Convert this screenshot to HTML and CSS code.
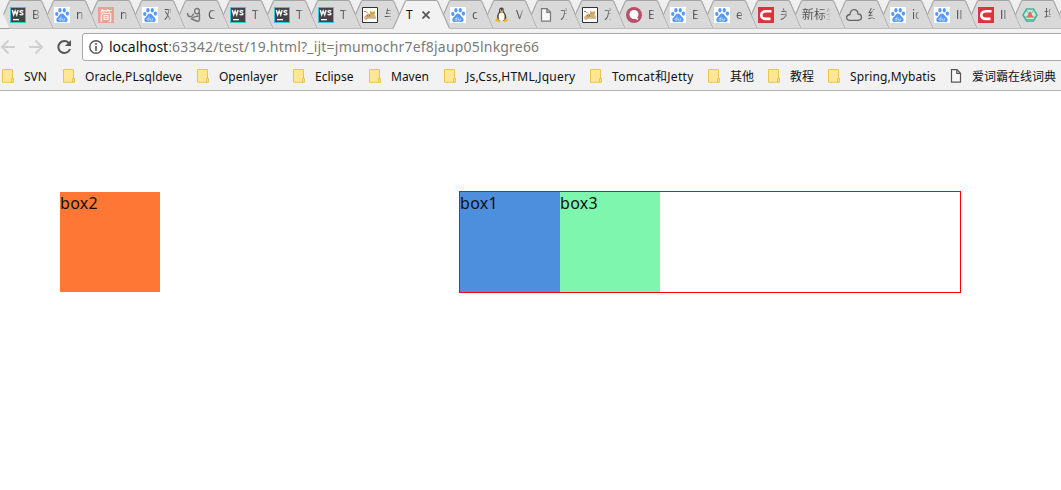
FILE: index.html
```html
<!DOCTYPE html>
<html lang="zh">
<head>
<meta charset="utf-8">
<title>T</title>
<link rel="stylesheet" href="styles.css">
</head>
<body>
<svg class="defs" width="0" height="0">
<defs>
<symbol id="shape" viewBox="0 0 56 29"><path class="shape-fill" d="M3.5 14.5L9 2Q9.7.5 11 .5H40Q41.300.5 42 2L53.500 28.500H9.500Z"/><path class="shape-line" d="M3.500 14.500L9 2Q9.700.5 11 .5H40Q41.300.5 42 2L53 27.500"/></symbol>
<symbol id="ws" viewBox="0 0 16 16"><path fill="#36c5dc" d="M0 0h16v16H0z"/><path fill="#444" d="M1 1h14v14H1z"/><path d="M2.300 3L3.700 7.700 5.200 4 6.700 7.700 8.100 3M13.300 4Q10 3 10 4.600C10 5.900 13.200 5.400 13 7Q12.400 8.300 9.500 7.400" fill="none" stroke="#f2f2f2" stroke-width="1.500"/><path fill="#fff" d="M3 12h6v1.300H3z"/></symbol>
<symbol id="paw" viewBox="0 0 16 16"><path fill="#fff" d="M0 0h16v16H0z"/><g fill="#559af8"><ellipse cx="2.800" cy="7" rx="1.700" ry="2.100"/><ellipse cx="5.900" cy="3.300" rx="1.600" ry="2.300"/><ellipse cx="10.300" cy="3.300" rx="1.600" ry="2.300"/><ellipse cx="13.400" cy="6.600" rx="1.700" ry="2.100"/><path d="M8 6.500C10 6.500 10.500 8.800 12.300 10.200C15.200 12.700 13 15.600 10.700 15.100Q8 14.600 5.400 15.100C2.600 15.600 1 12.700 3.700 10.300C5.600 8.700 6 6.500 8 6.500Z"/></g><path d="M7 9.800v3.500H5.500q-1-.8 0-1.700H7M8.700 11.300v2h2v-2" fill="none" stroke="#d5e6ff" stroke-width=".8"/></symbol>
<symbol id="cat" viewBox="0 0 16 16"><path fill="#fff" stroke="#333" d="M.5.5h15v15H.500z"/><path fill="#c4c4c4" d="M2 10l3-2h8l1 1v3H2z"/><path fill="#d7ad64" d="M2 10.500L4.500 7.500 8 6.800V3.500l1.500 1.300h2L13 3.500V7l-1.500 2 2 2.500h-2L9.500 10 7 10.500 4.500 12.700H2.500L4 10Z"/><path d="M2 4.500h2l2 2M9.300 6h.7m1.500 0h.7M5 8l1 1.500M7 7.500l1 2" stroke="#806238" stroke-width=".8" fill="none"/></symbol>
<symbol id="cee" viewBox="0 0 16 16"><path fill="#db343e" d="M0 0h16v16H0z"/><path d="M13.500 4.200H8Q3.500 4.500 3.300 8t4.200 3.900h5" fill="none" stroke="#fff" stroke-width="2.600"/></symbol>
<symbol id="file" viewBox="0 0 11 14"><path d="M1 .7h5.500L10 4.200v9H1zM6.300.7v3.700H10" fill="#f8f8f8" stroke="currentColor" stroke-width="1.200"/></symbol>
<symbol id="folder" viewBox="0 0 12 14"><path fill="#ffe793" stroke="#e9c550" d="M.5.5h10v9h1v3.800h-11z"/><path fill="#ffe793" stroke="#e9c550" d="M9.500 9.500h2v2l-1 1.800h-1z"/></symbol>
</defs>
</svg>
<header class="browser">
<div class="tabs">
<div class="tab"><svg class="shape"><use href="#shape"/></svg><svg class="icon"><use href="#ws"/></svg><span class="title">B</span></div>
<div class="tab"><svg class="shape"><use href="#shape"/></svg><svg class="icon"><use href="#paw"/></svg><span class="title">n</span></div>
<div class="tab"><svg class="shape"><use href="#shape"/></svg><span class="icon jian">简</span><span class="title">n</span></div>
<div class="tab"><svg class="shape"><use href="#shape"/></svg><svg class="icon"><use href="#paw"/></svg><span class="title">双</span></div>
<div class="tab"><svg class="shape"><use href="#shape"/></svg><svg class="icon" viewBox="0 0 16 16"><path d="M1.500 6Q1.500 9.500 4 9.800Q7 9.500 7.500 6.500M9.500 6.500C7.500 4 9 1.500 11 1.500C14 1.500 14 5.500 12 6.500Q10.500 7.200 9.500 6.500M13 4.500Q13.800 8 13.500 12.500Q13 14.800 10.500 14C7 12.800 5 12 5.500 11.500Q8 9.500 12.500 9" fill="none" stroke="#777" stroke-width="1.400"/></svg><span class="title">C</span></div>
<div class="tab"><svg class="shape"><use href="#shape"/></svg><svg class="icon"><use href="#ws"/></svg><span class="title">T</span></div>
<div class="tab"><svg class="shape"><use href="#shape"/></svg><svg class="icon"><use href="#ws"/></svg><span class="title">T</span></div>
<div class="tab"><svg class="shape"><use href="#shape"/></svg><svg class="icon"><use href="#ws"/></svg><span class="title">T</span></div>
<div class="tab"><svg class="shape"><use href="#shape"/></svg><svg class="icon"><use href="#cat"/></svg><span class="title">与</span></div>
<div class="tab active"><svg class="shape" viewBox="0 0 56 29"><path class="shape-fill" d="M-3 29L9 2Q9.700.5 11 .5H40Q41.300.5 42 2L54 29Z"/><path class="shape-line" d="M-3 28.500L9 2Q9.700.5 11 .5H40Q41.300.5 42 2L53.500 28.500"/></svg><span class="active-title">T</span><svg class="close" viewBox="0 0 8 8"><path d="M.5.5l7 7m0-7l-7 7" stroke="#555" stroke-width="1.700"/></svg></div>
<div class="tab"><svg class="shape"><use href="#shape"/></svg><svg class="icon"><use href="#paw"/></svg><span class="title">c</span></div>
<div class="tab"><svg class="shape"><use href="#shape"/></svg><svg class="icon" viewBox="0 0 16 16"><path fill="#444" d="M7.500 .5Q10.300 .5 10 4.500Q12.800 8 12.500 12L10 14H5.500L3 12Q2.500 8 5 4.500Q4.700 .5 7.500 .5Z"/><ellipse cx="7.600" cy="9.700" rx="3" ry="4.200" fill="#fff"/><path fill="#efb52b" d="M5.700 4.600l2-1 2 1-2 1.500zM2.800 10.700l3.200 3-.7 1.600-4.300-1.300zM12.300 10.700L9.500 13.700l.7 1.600 4.100-1.800z"/><path d="M6 3h1m1.500 0h1" stroke="#fff"/></svg><span class="title">V</span></div>
<div class="tab"><svg class="shape"><use href="#shape"/></svg><svg class="icon page"><use href="#file"/></svg><span class="title">方</span></div>
<div class="tab"><svg class="shape"><use href="#shape"/></svg><svg class="icon"><use href="#cat"/></svg><span class="title">方</span></div>
<div class="tab"><svg class="shape"><use href="#shape"/></svg><svg class="icon" viewBox="0 0 16 16"><circle cx="8" cy="8" r="8" fill="#b95069"/><circle cx="8" cy="7.500" r="4.500" fill="#fff"/><path d="M9 10.500l3 2" stroke="#fff" stroke-width="1.600"/></svg><span class="title">E</span></div>
<div class="tab"><svg class="shape"><use href="#shape"/></svg><svg class="icon"><use href="#paw"/></svg><span class="title">E</span></div>
<div class="tab"><svg class="shape"><use href="#shape"/></svg><svg class="icon"><use href="#paw"/></svg><span class="title">e</span></div>
<div class="tab"><svg class="shape"><use href="#shape"/></svg><svg class="icon"><use href="#cee"/></svg><span class="title">关</span></div>
<div class="tab"><svg class="shape"><use href="#shape"/></svg><span class="title wide">新标签</span></div>
<div class="tab"><svg class="shape"><use href="#shape"/></svg><svg class="icon" viewBox="0 0 16 16"><path d="M4 13.300C-.7 13.300-.3 7.700 4 7.500C4.500 1 11.500 1 12 7C16.700 7.300 16.500 13.300 12 13.300Z" fill="none" stroke="#666" stroke-width="1.300"/></svg><span class="title">红</span></div>
<div class="tab"><svg class="shape"><use href="#shape"/></svg><svg class="icon"><use href="#paw"/></svg><span class="title">ic</span></div>
<div class="tab"><svg class="shape"><use href="#shape"/></svg><svg class="icon"><use href="#paw"/></svg><span class="title plain">II</span></div>
<div class="tab"><svg class="shape"><use href="#shape"/></svg><svg class="icon"><use href="#cee"/></svg><span class="title plain">II</span></div>
<div class="tab"><svg class="shape"><use href="#shape"/></svg><svg class="icon" viewBox="0 0 16 16"><path d="M4.500 2h7l3.500 6-3.500 6h-7L1 8z" fill="#c9e8df" stroke="#45b398" stroke-width="1.500"/><path d="M4 3l4 5 4-5M1.500 10h5m3 0h5M3 12.500h10" stroke="#45b398" stroke-width=".8" fill="none"/><path fill="#ef6a50" d="M8 4l3.500 6.500h-7z"/></svg><span class="title">坞</span></div>
<div class="tab"><svg class="shape"><use href="#shape"/></svg></div>
</div>
<div class="toolbar">
<svg class="nav" viewBox="0 0 80 30"><g fill="none" stroke="#cfcfcf" stroke-width="2"><path d="M15 14H2.500M8.500 7.500L2 14l6.500 6.500M29 14h12.500M35.500 7.500L42 14l-6.500 6.500"/></g><path d="M69.200 10.500A6 6 0 1 0 70 16" fill="none" stroke="#555" stroke-width="2"/><path d="M71 7v6h-6z" fill="#555"/></svg>
<div class="address"><svg class="info" viewBox="0 0 14 14"><circle cx="7" cy="7" r="6.200" fill="none" stroke="#555" stroke-width="1.400"/><path d="M7 3v1.700M7 6v5" stroke="#555" stroke-width="1.600"/></svg><span class="host">localhost</span><span class="path">:63342/test/19.html?_ijt=jmumochr7ef8jaup05lnkgre66</span></div>
</div>
<nav class="bookmarks">
<a class="bm svn"><svg><use href="#folder"/></svg><span>SVN</span></a>
<a class="bm oracle"><svg><use href="#folder"/></svg><span>Oracle,PLsqldeve</span></a>
<a class="bm openlayer"><svg><use href="#folder"/></svg><span>Openlayer</span></a>
<a class="bm eclipse"><svg><use href="#folder"/></svg><span>Eclipse</span></a>
<a class="bm maven"><svg><use href="#folder"/></svg><span>Maven</span></a>
<a class="bm js"><svg><use href="#folder"/></svg><span>Js,Css,HTML,Jquery</span></a>
<a class="bm tomcat"><svg><use href="#folder"/></svg><span>Tomcat和Jetty</span></a>
<a class="bm short"><svg><use href="#folder"/></svg><span>其他</span></a>
<a class="bm short"><svg><use href="#folder"/></svg><span>教程</span></a>
<a class="bm spring"><svg><use href="#folder"/></svg><span>Spring,Mybatis</span></a>
<a class="bm dict"><svg><use href="#file"/></svg><span>爱词霸在线词典</span></a>
</nav>
</header>
<main class="content">
<div class="box orange">box2</div>
<section class="frame"><div class="box blue">box1</div><div class="box green">box3</div></section>
</main>
</body>
</html>
```
FILE: styles.css
```css
* { box-sizing: border-box; }
body { margin: 0; height: 490px; overflow: hidden; background: #fff; font-family: "Noto Sans", "Noto Sans CJK SC", sans-serif; }
.defs { position: absolute; }
.browser { height: 91px; background: #f2f2f2; border-bottom: 1px solid #b0b0b0; overflow: hidden; }
.tabs { display: flex; height: 29px; width: 1100px; background: #f0f0f0; border-bottom: 1px solid #a0a0a0; }
.tab { position: relative; flex: 0 0 44px; height: 29px; display: flex; align-items: flex-start; padding: 7px 0 0 10px; }
.shape { position: absolute; left: 0; top: 0; width: 56px; height: 29px; overflow: visible; }
.shape-fill { fill: #d9d9d9; }
.shape-line { fill: none; stroke: #a5a5a5; stroke-width: 1.1; }
.active { z-index: 1; }
.active .shape-fill { fill: #f2f2f2; }
.icon { position: relative; flex: none; width: 16px; height: 16px; }
.page { padding: 1px 2px; color: #777; }
.jian { background: #eb9f92; color: #fff; font-size: 13px; line-height: 16px; text-align: center; }
.title { position: relative; margin-left: 6px; width: 7px; flex: none; overflow: hidden; white-space: nowrap; font-size: 12px; line-height: 16px; color: #555; -webkit-mask-image: linear-gradient(90deg, #000 40%, rgba(0,0,0,.35)); }
.plain { font-family: "Liberation Sans", sans-serif; }
.wide { margin-left: 0; width: 29px; -webkit-mask-image: linear-gradient(90deg, #000 70%, transparent); }
.active-title { position: relative; font-size: 12px; line-height: 16px; color: #111; width: 16px; }
.close { position: relative; width: 8px; height: 8px; margin-top: 4px; }
.toolbar { height: 33px; display: flex; padding-top: 4px; }
.nav { flex: 0 0 80px; width: 80px; height: 30px; margin-right: 2px; }
.address { flex: 0 0 990px; height: 28px; display: flex; align-items: center; background: #fff; border: 1px solid #a9a9a9; border-radius: 3px; padding-left: 6px; white-space: nowrap; font-size: 14px; }
.info { width: 14px; height: 14px; margin-right: 6px; }
.host, .path { padding-bottom: 2px; }
.host { color: #111; }
.path { color: #7a7a7a; letter-spacing: .2px; }
.bookmarks { display: flex; height: 28px; width: 1100px; padding-left: 2px; }
.bm { display: flex; flex: none; height: 28px; align-items: center; font-size: 12px; color: #111; white-space: nowrap; }
.bm svg { width: 12px; height: 14px; margin-right: 10px; flex: none; color: #555; }
.svn { width: 61px; }
.oracle { width: 134px; letter-spacing: .06px; }
.openlayer { width: 96px; }
.eclipse { width: 76px; }
.maven { width: 75px; }
.js { width: 146px; letter-spacing: .2px; }
.tomcat { width: 118px; letter-spacing: .3px; }
.short { width: 60px; }
.spring { width: 122px; letter-spacing: .1px; }
.content { display: flex; padding: 100px 0 0 60px; }
.box { width: 100px; height: 100px; font-size: 16px; line-height: 22px; letter-spacing: .3px; color: #111; }
.orange { margin: 1px 299px 0 0; background: #ff7735; }
.frame { display: flex; width: 502px; height: 102px; border: 1px solid #f00; }
.blue { background: #4d8edd; }
.green { background: #7ef6ae; }
```
